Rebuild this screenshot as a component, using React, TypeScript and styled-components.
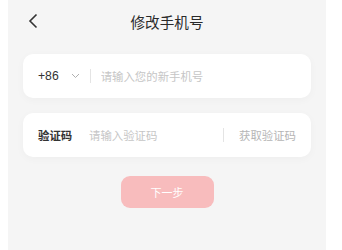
import React, { useState } from 'react';
import styled, { createGlobalStyle } from 'styled-components';

const GlobalStyle = createGlobalStyle`
  html, body {
    margin: 0;
    padding: 0;
    background: #ffffff;
    font-family: "Noto Sans CJK SC", "Liberation Sans", sans-serif;
  }
`;

const Page = styled.div`
  margin-left: 8px;
  width: 318px;
  min-height: 250px;
  background: #f5f5f5;
  display: flex;
  flex-direction: column;
`;

const Header = styled.div`
  height: 42px;
  display: grid;
  grid-template-columns: 1fr auto 1fr;
  align-items: center;
  padding: 0 20px;
`;

const BackButton = styled.button`
  justify-self: start;
  border: none;
  background: none;
  padding: 0;
  display: flex;
  cursor: pointer;
`;

const Title = styled.div`
  font-size: 14.6px;
  color: #2a2a2a;
  font-weight: 400;
`;

const Form = styled.div`
  padding: 12px 15px 0;
  display: flex;
  flex-direction: column;
  gap: 15px;
`;

const Card = styled.div`
  height: 44px;
  background: #ffffff;
  border-radius: 10px;
  box-shadow: 0 2px 8px rgba(0, 0, 0, 0.03);
  display: flex;
  align-items: center;
  padding: 0 15px;
`;

const CountryCode = styled.div`
  display: flex;
  align-items: center;
  gap: 12px;
  font-family: "Liberation Sans", Arial, sans-serif;
  font-size: 12.2px;
  color: #333333;
`;

const Divider = styled.span<{ $gap: number }>`
  width: 1px;
  height: 14px;
  background: #e4e4e4;
  margin: 0 ${(p) => p.$gap}px;
`;

const Label = styled.span`
  font-size: 11.4px;
  font-weight: 700;
  color: #333333;
  width: 51px;
  flex-shrink: 0;
`;

const Field = styled.input`
  flex: 1;
  min-width: 0;
  border: none;
  outline: none;
  background: transparent;
  padding: 0;
  font-family: "Noto Sans CJK SC", sans-serif;
  font-size: 11.4px;
  color: #333333;
  &::placeholder {
    color: #c6c6c6;
  }
`;

const CodeLink = styled.button`
  border: none;
  background: none;
  padding: 0;
  font-family: "Noto Sans CJK SC", sans-serif;
  font-size: 11.4px;
  color: #b5b5b5;
`;

const NextButton = styled.button`
  align-self: center;
  margin-top: 19px;
  width: 93px;
  height: 32px;
  border: none;
  border-radius: 9px;
  background: #f8bcbd;
  color: #ffffff;
  font-family: "Noto Sans CJK SC", sans-serif;
  font-size: 11px;
`;

export default function App() {
  const [phone, setPhone] = useState('');
  const [code, setCode] = useState('');

  return (
    <>
      <GlobalStyle />
      <Page>
        <Header>
          <BackButton>
            <svg width="10" height="16" viewBox="0 0 10 16">
              <polyline points="8.5,1.5 2,8 8.5,14.5" fill="none" stroke="#333" strokeWidth="1.6" />
            </svg>
          </BackButton>
          <Title>修改手机号</Title>
          <span />
        </Header>
        <Form>
          <Card>
            <CountryCode>
              +86
              <svg width="9" height="6" viewBox="0 0 9 6">
                <polyline points="1,1 4.5,4.5 8,1" fill="none" stroke="#b0b0b0" strokeWidth="1" />
              </svg>
            </CountryCode>
            <Divider $gap={10} />
            <Field placeholder="请输入您的新手机号" value={phone} onChange={(e) => setPhone(e.target.value)} />
          </Card>
          <Card>
            <Label>验证码</Label>
            <Field placeholder="请输入验证码" value={code} onChange={(e) => setCode(e.target.value)} />
            <Divider $gap={15} />
            <CodeLink>获取验证码</CodeLink>
          </Card>
        </Form>
        <NextButton disabled={!phone || !code}>下一步</NextButton>
      </Page>
    </>
  );
}
